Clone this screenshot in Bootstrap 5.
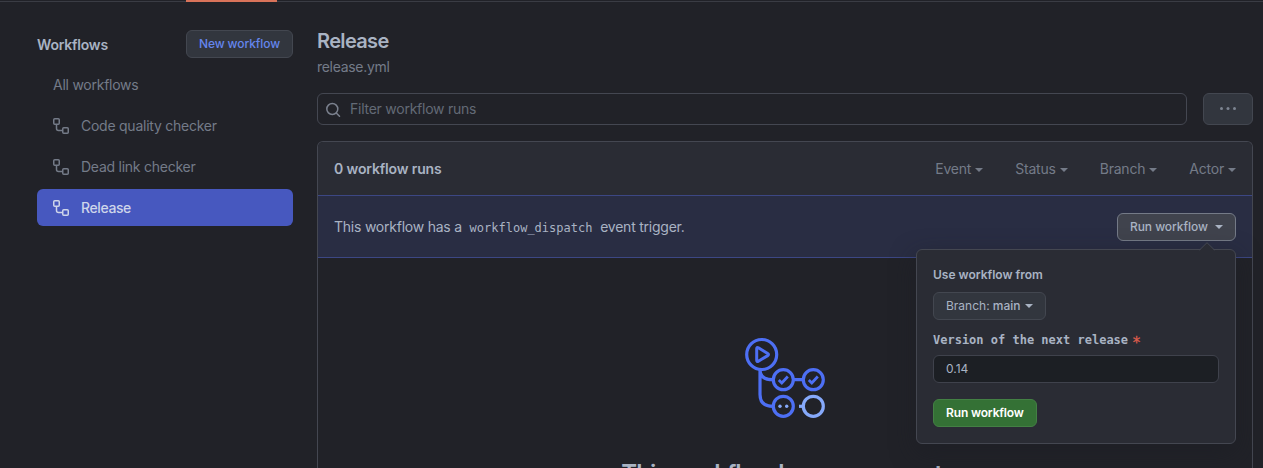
<!DOCTYPE html>
<html lang="en" data-bs-theme="dark">
<head>
<meta charset="utf-8">
<meta name="viewport" content="width=device-width, initial-scale=1">
<title>Release workflow runs</title>
<link href="https://cdn.jsdelivr.net/npm/bootstrap@5.3.0/dist/css/bootstrap.min.css" rel="stylesheet">
<style>
  :root { --line: #444751; --muted: #747b88; --text: #a9b3c3; }
  body { background: #212228; color: var(--text); font: 400 14px/21px Inter, "Liberation Sans", sans-serif; letter-spacing: -.25px; height: 468px; overflow: hidden; }
  .tabs-edge { height: 2px; border-bottom: 1px solid #3a3c44; }
  .tab-marker { width: 91px; height: 2px; margin-left: 186px; background: #d9735a; }
  .side { width: 256px; margin-left: 37px; padding-top: 28px; }
  .main-col { width: 936px; margin-left: 24px; padding-top: 25px; }
  .gh-btn { --bs-btn-font-size: 12px; --bs-btn-line-height: 20px; --bs-btn-padding-y: 3px; --bs-btn-padding-x: 12px; --bs-btn-border-radius: 6px; --bs-btn-font-weight: 500; --bs-btn-color: var(--text); --bs-btn-bg: #32363e; --bs-btn-border-color: #434750; white-space: nowrap; letter-spacing: -.09px; }
  .btn-new { --bs-btn-color: #6586ee; }
  .btn-open { --bs-btn-bg: #40434d; --bs-btn-border-color: #747a87; width: 119px; padding-left: 11px; padding-right: 11px; letter-spacing: -.04px; }
  .btn-go { --bs-btn-color: #fff; --bs-btn-bg: #347135; --bs-btn-border-color: #438044; font-weight: 600; letter-spacing: -.15px; }
  .btn-branch { margin-top: 7px; letter-spacing: 0; }
  .side-title { font-weight: 600; letter-spacing: -.2px; }
  .flow-link { height: 37px; padding: 0 16px; margin-bottom: 4px; border-radius: 6px; color: var(--muted); gap: 12px; }
  .flow-link.active { background: #4758bf; color: #ced5ea; font-weight: 500; letter-spacing: -.4px; }
  .page-title { font-size: 20px; line-height: 28px; font-weight: 600; letter-spacing: -.65px; margin: 0; color: var(--text); }
  .file-name { color: var(--muted); margin-top: 1px; letter-spacing: -.3px; }
  .search-row { margin-top: 16px; }
  .search-box { height: 32px; border: 1px solid var(--line); border-radius: 6px; color: #636a76; padding: 0 0 1px 7px; gap: 9px; }
  .btn-more { width: 50px; height: 32px; --bs-btn-padding-x: 0; --bs-btn-color: #7d8491; }
  .runs-box { border: 1px solid var(--line); border-bottom: 0; border-radius: 6px 6px 0 0; height: 327px; margin-top: 16px; }
  .runs-head { height: 53px; background: #2a2c34; border-radius: 5px 5px 0 0; padding: 0 16px; }
  .runs-count { font-weight: 600; letter-spacing: -.14px; }
  .filters { color: var(--muted); gap: 32px; letter-spacing: -.21px; }
  .tri { display: inline-block; border: 4px solid transparent; border-top-color: currentColor; border-bottom: 0; margin-left: 4px; vertical-align: 2px; }
  .trigger { height: 63px; background: #292d43; border: solid #3c4784; border-width: 1px 0; padding: 0 16px; letter-spacing: -.23px; }
  .trigger code { font: 12px "DejaVu Sans Mono", monospace; letter-spacing: 0; color: var(--text); margin: 0 4px; }
  .pop { top: 36px; right: 0; width: 320px; height: 195px; background: #2a2c34; border: 1px solid var(--line); border-radius: 6px; padding: 15px 16px; box-shadow: 0 8px 24px #1c1e2499; font-size: 12px; line-height: 20px; letter-spacing: 0; z-index: 2; }
  .pop-arrow { top: -8px; right: 20px; }
  .pop-label { font-weight: 600; }
  .mono-label { font: 700 12px/20px "DejaVu Sans Mono", monospace; height: 20px; margin-top: 10px; }
  .star { color: #d95b4b; margin-left: 4px; font-size: 15px; font-weight: 400; line-height: 0; vertical-align: -4px; -webkit-text-stroke: .3px; }
  .version-input.form-control { height: 28px; background: #1c1f24; border-color: #3f424c; border-radius: 6px; color: var(--text); font-size: 12px; padding: 3px 12px; margin: 5px 0 16px; }
  .blank-title { font-size: 24px; line-height: 36px; font-weight: 600; letter-spacing: -.93px; margin: 38px 0 0; white-space: nowrap; color: var(--text); }
  .blank-icon { margin-top: 80px; }
</style>
</head>
<body>
<svg class="d-none">
  <symbol id="flow" viewBox="0 0 16 16">
    <g fill="none" stroke="currentColor" stroke-width="1.5"><rect x=".75" y=".75" width="5.5" height="5.5" rx="1"/><rect x="9.75" y="9.75" width="5.5" height="5.5" rx="1"/><path d="M3.500 6.500v4a2 2 0 0 0 2 2h4"/></g>
  </symbol>
</svg>
<header class="tabs-edge"><div class="tab-marker"></div></header>
<div class="d-flex">
  <aside class="side flex-shrink-0">
    <div class="d-flex justify-content-between align-items-center">
      <span class="side-title">Workflows</span>
      <button class="btn gh-btn btn-new">New workflow</button>
    </div>
    <nav class="d-flex flex-column mt-2">
      <a class="flow-link d-flex align-items-center text-decoration-none">All workflows</a>
      <a class="flow-link d-flex align-items-center text-decoration-none"><svg width="16" height="16"><use href="#flow"/></svg>Code quality checker</a>
      <a class="flow-link d-flex align-items-center text-decoration-none"><svg width="16" height="16"><use href="#flow"/></svg>Dead link checker</a>
      <a class="flow-link active d-flex align-items-center text-decoration-none"><svg width="16" height="16"><use href="#flow"/></svg>Release</a>
    </nav>
  </aside>
  <main class="main-col flex-shrink-0">
    <h1 class="page-title">Release</h1>
    <div class="file-name">release.yml</div>
    <div class="search-row d-flex gap-3">
      <div class="search-box d-flex align-items-center flex-grow-1">
        <svg width="16" height="16" fill="none" stroke="#7b818e" stroke-width="1.5" stroke-linecap="round"><circle cx="7.300" cy="8" r="5.500"/><path d="M11.500 12.300 14.500 15.200"/></svg>
        <span>Filter workflow runs</span>
      </div>
      <button class="btn gh-btn btn-more d-flex align-items-center justify-content-center" aria-label="More"><svg width="16" height="16" fill="currentColor"><circle cx="1.500" cy="7.500" r="1.500"/><circle cx="8" cy="7.500" r="1.500"/><circle cx="14.500" cy="7.500" r="1.500"/></svg></button>
    </div>
    <section class="runs-box">
      <div class="runs-head d-flex align-items-center justify-content-between">
        <span class="runs-count">0 workflow runs</span>
        <div class="filters d-flex"><span>Event<i class="tri"></i></span><span>Status<i class="tri"></i></span><span>Branch<i class="tri"></i></span><span>Actor<i class="tri"></i></span></div>
      </div>
      <div class="trigger d-flex align-items-center justify-content-between">
        <div>This workflow has a <code>workflow_dispatch</code> event trigger.</div>
        <div class="position-relative">
          <button class="btn gh-btn btn-open d-block">Run workflow <i class="tri"></i></button>
          <div class="pop position-absolute">
            <svg class="pop-arrow position-absolute" width="16" height="9"><path d="M1 8 8 1l7 7v1H1z" fill="#2a2c34"/><path d="M.5 8 8 .7 15.500 8" fill="none" stroke="#444751"/></svg>
            <div class="pop-label">Use workflow from</div>
            <button class="btn gh-btn btn-branch d-block"><span class="fw-normal">Branch:</span> main<i class="tri"></i></button>
            <label class="mono-label d-block" for="version">Version of the next release<span class="star">*</span></label>
            <input class="form-control version-input" id="version" value="0.14">
            <button class="btn gh-btn btn-go d-block">Run workflow</button>
          </div>
        </div>
      </div>
      <div class="text-center">
        <svg class="blank-icon d-block mx-auto" width="80" height="80" fill="none" stroke="#4d6ff4" stroke-width="3.2" overflow="visible">
          <circle cx="16.700" cy="16.500" r="15"/><path d="M11.700 10.800v11.400q0 2 1.700 1l9.300-5.600q1.600-1 0-2L13.400 9.800q-1.700-1-1.700 1z" stroke-width="3"/>
          <path d="M15 32v24.500q0 11.800 13 11.800M15 32q0 9.700 13 9.700M49 41.700h9"/>
          <circle cx="38.300" cy="41.700" r="10"/><circle cx="68.300" cy="41.700" r="10"/><circle cx="38.300" cy="68.300" r="10"/>
          <path d="m33.800 42 3 3 6-6.500M63.800 42l3 3 6-6.500" stroke-width="2.800"/>
          <g fill="#86a9fa" stroke="none"><circle cx="35" cy="68.300" r="1.700"/><circle cx="41.700" cy="68.300" r="1.700"/></g>
          <g stroke="#86a9fa"><circle cx="68.300" cy="68.300" r="10"/><path d="M54 68.300h4"/></g>
        </svg>
        <h3 class="blank-title">This workflow has no runs yet.</h3>
      </div>
    </section>
  </main>
</div>
<script src="https://cdn.jsdelivr.net/npm/bootstrap@5.3.0/dist/js/bootstrap.bundle.min.js"></script>
</body>
</html>
